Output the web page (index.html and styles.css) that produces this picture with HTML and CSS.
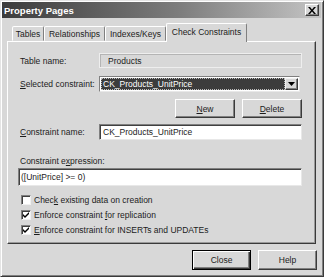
FILE: index.html
```html
<!DOCTYPE html>
<html lang="en">
<head>
  <meta charset="UTF-8">
  <title>Property Pages</title>
  <link rel="stylesheet" href="styles.css">
</head>
<body>
  <div class="window">
    <div class="titlebar">
      <span class="title">Property Pages</span>
      <span class="close-x">
        <svg width="8" height="7" viewBox="0 0 8 7"><path d="M0 0h2l2 2.5 2-2.5h2l-3 3.5 3 3.5h-2l-2-2.5-2 2.5h-2l3-3.5z" fill="#000"/></svg>
      </span>
    </div>
    <div class="tabs">
      <div class="tab tab-tables">Tables</div>
      <div class="tab tab-rel">Relationships</div>
      <div class="tab tab-idx">Indexes/Keys</div>
      <div class="tab active">Check Constraints</div>
    </div>
    <div class="panel">
      <div class="form-row">
        <label>Table name:</label>
        <div class="field readonly">Products</div>
      </div>
      <div class="form-row combo-row">
        <label><u>S</u>elected constraint:</label>
        <div class="combo">
          <span class="combo-value"><span>CK_Products_UnitPrice</span></span>
          <span class="combo-btn">
            <svg width="7" height="4" viewBox="0 0 7 4"><path d="M0 0h7l-3.5 4z" fill="#000"/></svg>
          </span>
        </div>
      </div>
      <div class="button-row">
        <button class="btn"><u>N</u>ew</button>
        <button class="btn"><u>D</u>elete</button>
      </div>
      <div class="form-row name-row">
        <label><u>C</u>onstraint name:</label>
        <div class="field">CK_Products_UnitPrice</div>
      </div>
      <div class="expr-label">Constraint e<u>x</u>pression:</div>
      <div class="field expr">([UnitPrice] &gt;= 0)</div>
      <div class="checks">
        <div class="check"><span class="box"></span><span>Chec<u>k</u> existing data on creation</span></div>
        <div class="check"><span class="box"><svg width="8" height="8" viewBox="0 0 8 8"><path d="M1 3l2 2 4-4v2l-4 4-2-2z" fill="#000"/></svg></span><span>Enforce constraint <u>f</u>or replication</span></div>
        <div class="check"><span class="box"><svg width="8" height="8" viewBox="0 0 8 8"><path d="M1 3l2 2 4-4v2l-4 4-2-2z" fill="#000"/></svg></span><span><u>E</u>nforce constraint for INSERTs and UPDATEs</span></div>
      </div>
    </div>
    <div class="footer">
      <button class="btn default">Close</button>
      <button class="btn">Help</button>
    </div>
  </div>
</body>
</html>
```

FILE: styles.css
```css
body {
  margin: 0;
  padding: 0;
  background: #d8d8d8;
  font-family: 'Liberation Sans', Arial, sans-serif;
  font-size: 8.5px;
  color: #1c1c1c;
}
.window {
  width: 324px;
  height: 277px;
  box-sizing: border-box;
  background: #d8d8d8;
  border: 1px solid;
  border-color: #e4e4e4 #3a3a3a #3a3a3a #e4e4e4;
  box-shadow: inset 1px 1px #fff, inset -1px -1px #808080;
  padding: 1px 2px 1px 1px;
  display: flex;
  flex-direction: column;
}
.titlebar {
  height: 16px;
  background: linear-gradient(90deg, #3c3c3c, #7c7c7c 55%, #c4c4c4);
  display: flex;
  align-items: center;
  justify-content: space-between;
  padding: 0 2px 0 2px;
}
.title {
  color: #fff;
  font-weight: bold;
  font-size: 9.5px;
}
.close-x {
  width: 14px;
  height: 12px;
  box-sizing: border-box;
  background: #d8d8d8;
  border: 1px solid;
  border-color: #fff #3a3a3a #3a3a3a #fff;
  box-shadow: inset -1px -1px #808080;
  display: flex;
  align-items: center;
  justify-content: center;
}
.tabs {
  display: flex;
  align-items: flex-end;
  margin-top: 5px;
  padding-left: 10px;
  height: 18px;
  position: relative;
  z-index: 1;
}
.tab {
  height: 15px;
  box-sizing: border-box;
  border: 1px solid;
  border-color: #fff #808080 transparent #fff;
  border-radius: 2px 2px 0 0;
  display: flex;
  align-items: center;
  justify-content: center;
  background: #d8d8d8;
}
.tab-tables { width: 32px; }
.tab-rel { width: 61px; }
.tab-idx { width: 61px; }
.tab.active {
  width: 81px;
  height: 19px;
  margin-bottom: -1px;
  padding-bottom: 2px;
  border-bottom: none;
}
.panel {
  margin: 0 5px 0 5px;
  height: 203px;
  box-sizing: border-box;
  border: 1px solid;
  border-color: #fff #3a3a3a #3a3a3a #fff;
  box-shadow: inset -1px -1px #9a9a9a;
  padding: 11px 13px 0 12px;
  display: flex;
  flex-direction: column;
}
.form-row {
  display: grid;
  grid-template-columns: 79px 1fr;
  align-items: center;
}
.combo-row { margin-top: 8px; }
.name-row { margin-top: 6px; }
.field {
  height: 16px;
  box-sizing: border-box;
  background: #fff;
  border: 1px solid;
  border-color: #808080 #e8e8e8 #e8e8e8 #808080;
  box-shadow: inset 1px 1px #404040;
  padding: 0 3px;
  display: flex;
  align-items: center;
}
.field.readonly {
  height: 15px;
  background: #d8d8d8;
  border-color: #eeeeee;
  box-shadow: inset 1px 1px #b4b4b4;
  padding-left: 8px;
}
.combo {
  height: 16px;
  width: 201px;
  box-sizing: border-box;
  border: 1px solid;
  border-color: #808080 #e8e8e8 #e8e8e8 #808080;
  background: #fff;
  display: flex;
  padding: 1px;
}
.combo-value {
  flex: 1;
  background: #3c3c3c;
  color: #fff;
  outline: 1px dotted #bbb;
  outline-offset: -1px;
  display: flex;
  align-items: center;
  padding-left: 2px;
}
.combo-btn {
  width: 13px;
  box-sizing: border-box;
  background: #d8d8d8;
  border: 1px solid;
  border-color: #f0f0f0 #3a3a3a #3a3a3a #f0f0f0;
  box-shadow: inset -1px -1px #808080;
  display: flex;
  align-items: center;
  justify-content: center;
}
.button-row {
  display: flex;
  justify-content: flex-end;
  gap: 7px;
  margin-top: 7px;
}
.btn {
  width: 60px;
  height: 19px;
  box-sizing: border-box;
  font-family: inherit;
  font-size: inherit;
  color: #1c1c1c;
  background: #d8d8d8;
  border: 1px solid;
  border-color: #fff #3a3a3a #3a3a3a #fff;
  box-shadow: inset -1px -1px #808080;
  padding: 0;
}
.expr-label {
  margin-top: 16px;
  height: 11px;
}
.field.expr {
  margin: 1px 0 0 -2px;
  height: 18px;
  padding-left: 2px;
}
.checks {
  margin-top: 8px;
  display: flex;
  flex-direction: column;
  gap: 4px;
}
.check {
  display: flex;
  align-items: center;
  gap: 3px;
  height: 11px;
  padding-left: 1px;
}
.box {
  width: 10px;
  height: 10px;
  box-sizing: border-box;
  background: #fff;
  border: 1px solid;
  border-color: #808080 #f0f0f0 #f0f0f0 #808080;
  box-shadow: inset 1px 1px #404040;
  display: flex;
  align-items: center;
  justify-content: center;
}
.footer {
  display: flex;
  justify-content: flex-end;
  gap: 7px;
  padding: 6px 4px 0 0;
}
.footer .btn {
  width: 59px;
  height: 20px;
}
.btn.default {
  border: 1px solid #000;
  box-shadow: inset 1px 1px #fff, inset -1px -1px #3a3a3a, inset -2px -2px #808080;
}
```
